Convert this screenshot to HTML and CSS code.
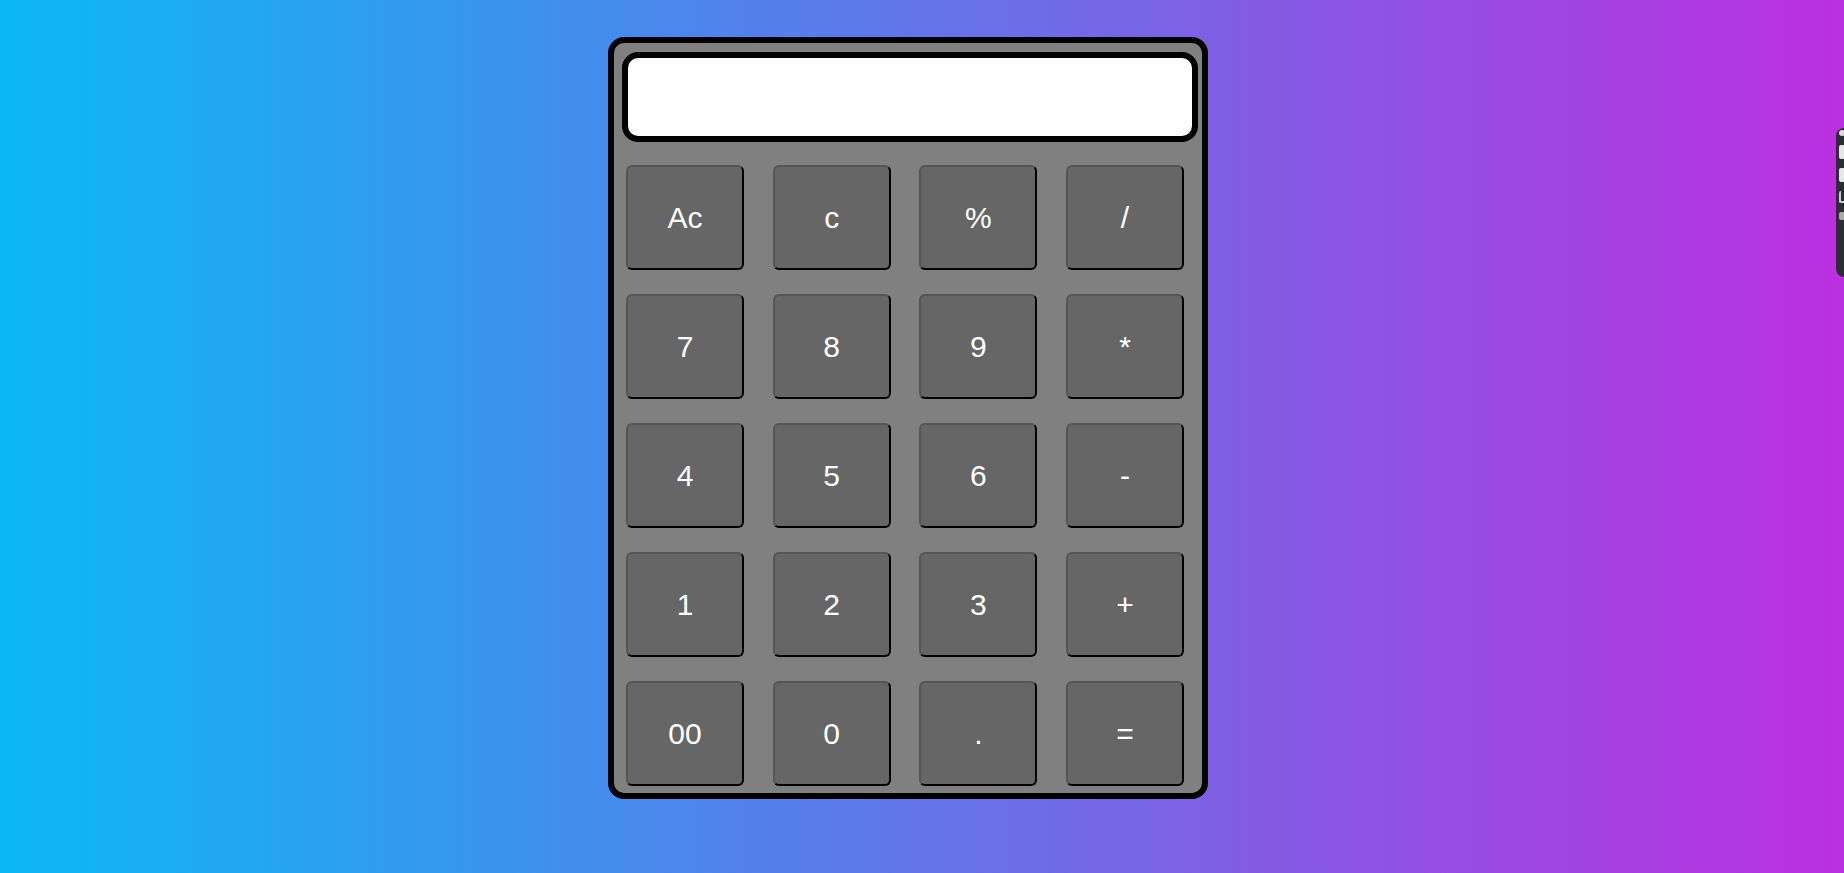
FILE: index.html
```html
<!DOCTYPE html>
<html lang="en">
<head>
<meta charset="utf-8">
<title>Calculator</title>
<link rel="stylesheet" href="styles.css">
</head>
<body>
  <div class="calculator">
    <input class="display" type="text" readonly>
    <div class="keys">
      <button class="key">Ac</button>
      <button class="key">c</button>
      <button class="key">%</button>
      <button class="key">/</button>
      <button class="key">7</button>
      <button class="key">8</button>
      <button class="key">9</button>
      <button class="key">*</button>
      <button class="key">4</button>
      <button class="key">5</button>
      <button class="key">6</button>
      <button class="key">-</button>
      <button class="key">1</button>
      <button class="key">2</button>
      <button class="key">3</button>
      <button class="key">+</button>
      <button class="key">00</button>
      <button class="key">0</button>
      <button class="key">.</button>
      <button class="key">=</button>
    </div>
  </div>
  <div class="ext-panel">
    <span class="ext-dot"></span>
    <span class="ext-item"></span>
    <span class="ext-item"></span>
    <span class="ext-item small"></span>
    <span class="ext-item tiny"></span>
  </div>
</body>
</html>
```

FILE: styles.css
```css
html, body {
  margin: 0;
  height: 100%;
}

body {
  background: linear-gradient(to right, #0bb9f4, #bb30df);
  display: flex;
  justify-content: center;
  align-items: flex-start;
  padding: 37px 28px 0 0;
  box-sizing: border-box;
  overflow: hidden;
  font-family: "Liberation Sans", Arial, sans-serif;
}

.calculator {
  width: 588px;
  background: #808080;
  border: 6px solid #000;
  border-radius: 16px;
  padding: 9px 0 7px 0;
  display: flex;
  flex-direction: column;
}

.display {
  display: block;
  margin: 0 0 0 8px;
  width: 576px;
  height: 90px;
  box-sizing: border-box;
  border: 6px solid #000;
  border-radius: 16px;
  background: #fff;
  outline: none;
  font-family: "Liberation Sans", Arial, sans-serif;
  font-size: 30px;
  padding: 0 12px;
  text-align: right;
}

.keys {
  margin: 23px 0 0 12px;
  display: grid;
  grid-template-columns: repeat(4, 118px);
  grid-auto-rows: 105px;
  column-gap: 28.67px;
  row-gap: 24px;
}

.key {
  box-sizing: border-box;
  background: #666;
  color: #fff;
  font-family: "Liberation Sans", Arial, sans-serif;
  font-size: 30px;
  border-style: solid;
  border-width: 2px;
  border-color: #555 #000 #000 #555;
  border-radius: 6px;
  padding: 0;
  cursor: pointer;
}

.ext-panel {
  position: absolute;
  top: 128px;
  left: 1836px;
  width: 30px;
  height: 149px;
  background: #2a2d31;
  border-radius: 8px;
  display: flex;
  flex-direction: column;
  align-items: flex-start;
  gap: 9px;
  padding: 2px 0 0 3px;
  box-sizing: border-box;
}

.ext-dot {
  width: 6px;
  height: 6px;
  background: #ddd;
  border-radius: 50%;
}

.ext-item {
  width: 6px;
  height: 14px;
  background: #e6e6e6;
  border-radius: 2px;
}

.ext-item.small {
  background: none;
  border: 2px solid #ccc;
  border-top: none;
  height: 10px;
  width: 4px;
}

.ext-item.tiny {
  height: 8px;
  background: #aaa;
}
```
